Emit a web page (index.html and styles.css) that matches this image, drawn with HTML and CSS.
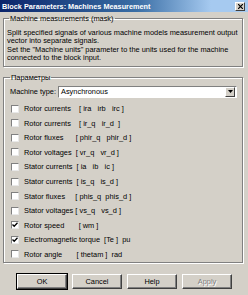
FILE: index.html
```html
<!DOCTYPE html>
<html lang="en">

<head>
    <meta charset="UTF-8">
    <title>Block Parameters: Machines Measurement</title>
    <link rel="stylesheet" href="styles.css">
</head>

<body>
    <div class="titlebar">
        <span class="title">Block Parameters: Machines Measurement</span>
        <span class="close-btn">
            <svg width="5" height="5" viewBox="0 0 5 5"><path d="M0 0L5 5M5 0L0 5" stroke="#000" stroke-width="1.2"/></svg>
        </span>
    </div>

    <div class="main">
        <fieldset class="group desc">
            <legend>Machine measurements (mask)</legend>
            <p>Split specified signals of various machine models measurement output</p>
            <p>vector into separate signals.</p>
            <p>Set the "Machine units" parameter to the units used for the machine</p>
            <p>connected to the block input.</p>
        </fieldset>

        <fieldset class="group params">
            <legend>Параметры</legend>
            <div class="type-row">
                <span class="type-label">Machine type:</span>
                <div class="combo">
                    <span class="combo-value">Asynchronous</span>
                    <span class="combo-btn">
                        <svg width="5" height="3" viewBox="0 0 5 3"><path d="M0 0H5L2.5 3Z" fill="#000"/></svg>
                    </span>
                </div>
            </div>

            <div class="signals">
                <div class="signal"><span class="box"></span><span class="name">Rotor currents    [ ira   irb   irc ]</span></div>
                <div class="signal"><span class="box"></span><span class="name">Rotor currents    [ ir_q   ir_d  ]</span></div>
                <div class="signal"><span class="box"></span><span class="name">Rotor fluxes      [ phir_q   phir_d ]</span></div>
                <div class="signal"><span class="box"></span><span class="name">Rotor voltages  [ vr_q   vr_d ]</span></div>
                <div class="signal"><span class="box"></span><span class="name">Stator currents  [ ia   ib   ic ]</span></div>
                <div class="signal"><span class="box"></span><span class="name">Stator currents  [ is_q   is_d ]</span></div>
                <div class="signal"><span class="box"></span><span class="name">Stator fluxes     [ phis_q  phis_d ]</span></div>
                <div class="signal"><span class="box"></span><span class="name">Stator voltages [ vs_q   vs_d ]</span></div>
                <div class="signal"><span class="box checked"><svg width="6" height="6" viewBox="0 0 6 6"><path d="M0.5 2.5L2.2 4.3L5.5 0.8" fill="none" stroke="#000" stroke-width="1.3"/></svg></span><span class="name">Rotor speed       [ wm ]</span></div>
                <div class="signal"><span class="box checked"><svg width="6" height="6" viewBox="0 0 6 6"><path d="M0.5 2.5L2.2 4.3L5.5 0.8" fill="none" stroke="#000" stroke-width="1.3"/></svg></span><span class="name">Electromagnetic torque  [Te ]  pu</span></div>
                <div class="signal"><span class="box"></span><span class="name">Rotor angle       [ thetam ]  rad</span></div>
            </div>
        </fieldset>

        <div class="buttons">
            <span class="btn default">OK</span>
            <span class="btn">Cancel</span>
            <span class="btn">Help</span>
            <span class="btn disabled">Apply</span>
        </div>
    </div>
</body>

</html>
```

FILE: styles.css
```css
body {
    margin: 0;
    width: 248px;
    height: 295px;
    overflow: hidden;
    background-color: #d4d0c8;
    font-family: "Liberation Sans", Arial, sans-serif;
    font-size: 7.4px;
    color: #000;
}

.titlebar {
    height: 12px;
    display: flex;
    align-items: center;
    justify-content: space-between;
    padding: 0 3px 0 2px;
    background: linear-gradient(to right, #0a246a 0%, #3a6ea5 55%, #a6caf0 85%, #a6caf0 100%);
}

.title {
    color: #fff;
    font-weight: bold;
    font-size: 7.3px;
}

.close-btn {
    width: 8px;
    height: 7px;
    display: flex;
    align-items: center;
    justify-content: center;
    background-color: #d4d0c8;
    border-top: 1px solid #fff;
    border-left: 1px solid #fff;
    border-right: 1px solid #404040;
    border-bottom: 1px solid #404040;
}

.main {
    padding: 0 5px 0 3px;
}

/* etched group boxes */
.group {
    margin: 0;
    border: 1px solid #808080;
    box-shadow: 1px 1px 0 #fff, inset 1px 1px 0 #fff;
}

.group legend {
    line-height: 8px;
    padding: 0 1px;
}

.desc {
    margin-top: 2.5px;
    padding: 6px 3px 3.5px 3px;
}

.desc legend {
    margin-left: 2px;
}

.desc p {
    margin: 0;
    line-height: 8.5px;
    white-space: nowrap;
}

.params {
    margin-top: 6.5px;
    padding: 4px 5px 0 6px;
}

.type-row {
    display: flex;
    align-items: center;
    height: 12px;
}

.type-label {
    width: 48px;
}

.combo {
    flex: 1;
    height: 12px;
    box-sizing: border-box;
    display: flex;
    align-items: center;
    background-color: #fff;
    border-top: 1px solid #808080;
    border-left: 1px solid #808080;
    border-right: 1px solid #fff;
    border-bottom: 1px solid #fff;
}

.combo-value {
    flex: 1;
    padding-left: 2px;
}

.combo-btn {
    width: 8px;
    height: 8px;
    margin-right: 1px;
    display: flex;
    align-items: center;
    justify-content: center;
    background-color: #d4d0c8;
    border-top: 1px solid #fff;
    border-left: 1px solid #fff;
    border-right: 1px solid #404040;
    border-bottom: 1px solid #404040;
}

.signals {
    margin-top: 3.75px;
}

.signal {
    height: 14.6px;
    display: flex;
    align-items: center;
}

.box {
    width: 6px;
    height: 6px;
    margin-left: 1px;
    margin-right: 5px;
    display: flex;
    align-items: center;
    justify-content: center;
    background-color: #fff;
    border-top: 1px solid #808080;
    border-left: 1px solid #808080;
    border-right: 1px solid #e8e8e8;
    border-bottom: 1px solid #e8e8e8;
}

.name {
    white-space: pre;
}

.buttons {
    display: flex;
    gap: 5px;
    margin-top: 11.5px;
    padding-left: 14px;
}

.btn {
    width: 50px;
    height: 15px;
    box-sizing: border-box;
    display: flex;
    align-items: center;
    justify-content: center;
    background-color: #d4d0c8;
    border-top: 1px solid #fff;
    border-left: 1px solid #fff;
    border-right: 1px solid #404040;
    border-bottom: 1px solid #404040;
    box-shadow: inset -1px -1px 0 #808080;
}

.btn.default {
    outline: 1px solid #000;
}

.btn.disabled {
    color: #808080;
    text-shadow: 1px 1px 0 #fff;
}
```
